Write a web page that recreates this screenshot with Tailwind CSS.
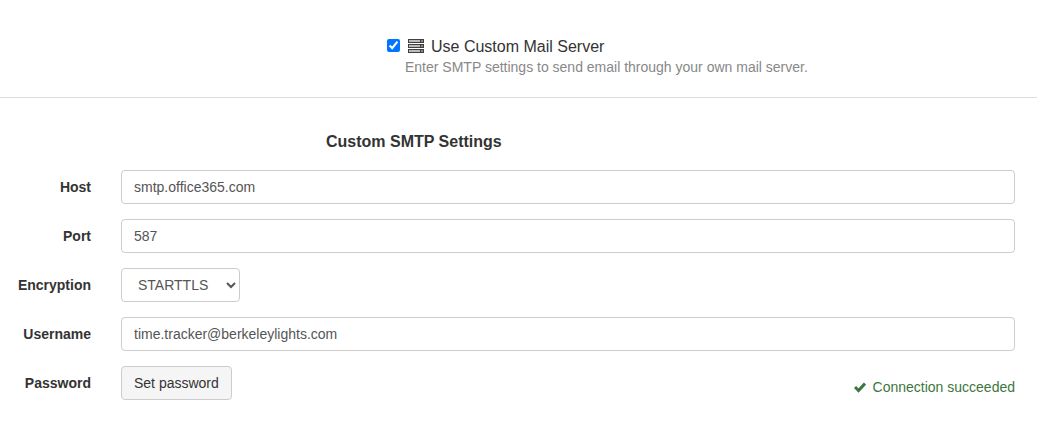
<!DOCTYPE html>
<html lang="en">
<head>
    <meta charset="UTF-8">
    <meta name="viewport" content="width=device-width, initial-scale=1.0">
    <title>Mail Server Settings</title>
    <script src="https://cdn.jsdelivr.net/npm/@tailwindcss/browser@4"></script>
</head>
<body class="bg-white font-['Liberation_Sans',Arial,sans-serif] text-sm text-[#333]">
    <form>
        <div class="flex flex-col border-b border-[#ddd] pt-[37px] pb-5 pl-[387px]">
            <div class="flex items-start gap-2">
                <input type="checkbox" id="customServer" checked class="mt-0.5 size-[13px]">
                <label for="customServer" class="flex items-start gap-[7px] text-base leading-5">
                    <svg class="mt-0.5 h-3.5 w-4" viewBox="0 0 16 14" aria-hidden="true" shape-rendering="crispEdges">
                        <path d="M0 0h16v4H0zM0 5h16v4H0zM0 10h16v4H0z" fill="#433f3f"/>
                        <path d="M1 1h11v2H1zM1 6h11v2H1zM1 11h11v2H1z" fill="#bbb"/>
                        <path d="M13 1h2v2h-2zM13 6h2v2h-2zM13 11h2v2h-2z" fill="#888"/>
                    </svg>
                    Use Custom Mail Server
                </label>
            </div>
            <p class="pl-[18px] leading-5 text-[#888]">Enter SMTP settings to send email through your own mail server.</p>
        </div>

        <h2 class="mt-8 mb-4 pl-[326px] text-base leading-6 font-bold">Custom SMTP Settings</h2>
        <div class="grid grid-cols-[91px_1fr] items-center gap-x-[30px] gap-y-[15px] pr-[22px]">
            <label for="host" class="text-right font-bold">Host</label>
            <input type="text" id="host" value="smtp.office365.com" class="h-[34px] w-full rounded border border-[#ccc] px-3 text-[#555]">

            <label for="port" class="text-right font-bold">Port</label>
            <input type="text" id="port" value="587" class="h-[34px] w-full rounded border border-[#ccc] px-3 text-[#555]">

            <label for="encryption" class="text-right font-bold">Encryption</label>
            <select id="encryption" class="h-[34px] w-[119px] rounded border border-[#ccc] bg-white px-3 text-[#555]">
                <option>STARTTLS</option>
            </select>

            <label for="username" class="text-right font-bold">Username</label>
            <input type="text" id="username" value="time.tracker@berkeleylights.com" class="h-[34px] w-full rounded border border-[#ccc] px-3 text-[#555]">

            <label for="password" class="text-right font-bold">Password</label>
            <div class="flex items-center justify-between">
                <button type="button" id="password" class="h-[34px] rounded border border-[#ccc] bg-[#f5f5f5] px-3">Set password</button>
                <span class="flex items-center gap-[7px] pt-2 text-[#3c763d]">
                    <svg class="size-3" viewBox="0 0 12 12" fill="none" aria-hidden="true">
                        <path d="M1 6l3.500 3.500L11 2.500" stroke="currentColor" stroke-width="3"/>
                    </svg>
                    Connection succeeded
                </span>
            </div>
        </div>
    </form>
</body>
</html>
